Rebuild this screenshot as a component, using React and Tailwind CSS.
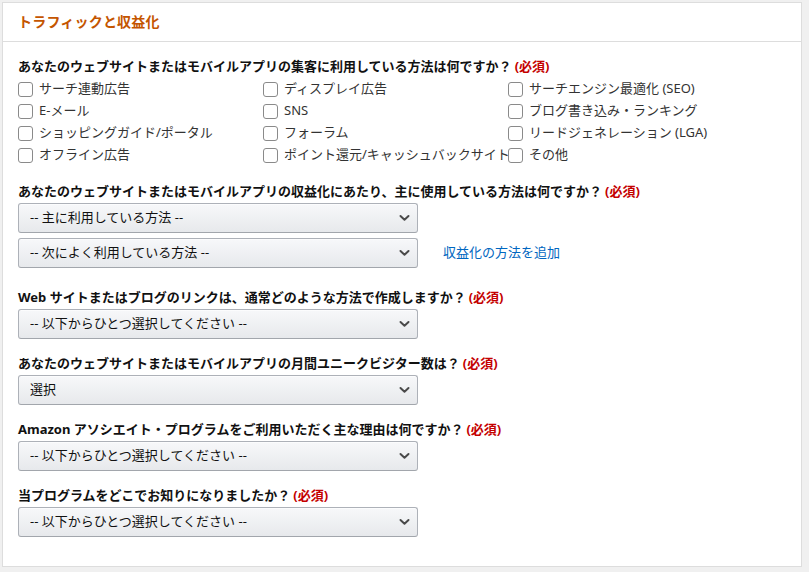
import React from "react";

const channels = [
  "サーチ連動広告",
  "ディスプレイ広告",
  "サーチエンジン最適化 (SEO)",
  "E-メール",
  "SNS",
  "ブログ書き込み・ランキング",
  "ショッピングガイド/ポータル",
  "フォーラム",
  "リードジェネレーション (LGA)",
  "オフライン広告",
  "ポイント還元/キャッシュバックサイト",
  "その他",
];

const Required = () => (
  <span className="ml-[3px] font-bold text-[#c40000]">(必須)</span>
);

const Label = ({ children, className = "" }) => (
  <div
    className={`text-[13px] leading-[20px] font-bold text-[#111111] whitespace-nowrap ${className}`}
  >
    {children}
    <Required />
  </div>
);

const Chevron = () => (
  <svg width="11" height="7" viewBox="0 0 11 7" fill="none">
    <path
      d="M1.5 1.5 L5.5 5.2 L9.5 1.5"
      stroke="#4a4a4a"
      strokeWidth="2"
      strokeLinecap="round"
      strokeLinejoin="round"
    />
  </svg>
);

const Dropdown = ({ value }) => (
  <div className="relative w-[400px] h-[30px]">
    <select
      defaultValue={value}
      className="appearance-none w-full h-full pl-[11px] pr-8 text-[13px] text-[#111111] rounded-[3px] border border-[#adb1b8] border-b-[#a2a6ac] bg-gradient-to-b from-[#f7f8fa] to-[#e7e9ec] shadow-[inset_0_1px_0_rgba(255,255,255,0.6)] outline-none"
    >
      <option>{value}</option>
    </select>
    <span className="pointer-events-none absolute right-[8px] top-1/2 -translate-y-1/2 flex items-center">
      <Chevron />
    </span>
  </div>
);

const Field = ({ label, value, className = "" }) => (
  <div className={className}>
    <Label className="mb-[2px]">{label}</Label>
    <Dropdown value={value} />
  </div>
);

export default function App() {
  return (
    <div
      className="min-h-screen bg-[#f0f0f0] pt-[2px] pl-[2px]"
      style={{ fontFamily: '"Noto Sans", "Noto Sans CJK JP", sans-serif' }}
    >
      <div className="w-[800px] h-[565px] bg-white border border-[#dddddd] flex flex-col">
        {/* section header */}
        <div className="h-[39px] shrink-0 border-b border-[#dddddd] flex items-center px-[15px]">
          <h2 className="text-[14px] leading-none font-bold text-[#c45500] tracking-[0.2px]">
            トラフィックと収益化
          </h2>
        </div>

        <div className="px-[15px] pt-[14px]">
          {/* traffic sources */}
          <Label>
            あなたのウェブサイトまたはモバイルアプリの集客に利用している方法は何ですか？
          </Label>
          <div className="mt-[2px] grid grid-cols-[245px_245px_245px]">
            {channels.map((c) => (
              <label
                key={c}
                className="h-[22px] flex items-center whitespace-nowrap text-[13px] text-[#333333]"
              >
                <input
                  type="checkbox"
                  className="appearance-none w-[15px] h-[15px] shrink-0 rounded-[3px] border border-[#8a8a8a] bg-white"
                />
                <span className="ml-[6px]">{c}</span>
              </label>
            ))}
          </div>

          {/* monetization */}
          <div className="mt-[15px]">
            <Label className="mb-[2px]">
              あなたのウェブサイトまたはモバイルアプリの収益化にあたり、主に使用している方法は何ですか？
            </Label>
            <Dropdown value="-- 主に利用している方法 --" />
            <div className="mt-[5px] flex items-center">
              <Dropdown value="-- 次によく利用している方法 --" />
              <a
                href="#"
                className="ml-[25px] text-[13px] text-[#0066c0] whitespace-nowrap"
              >
                収益化の方法を追加
              </a>
            </div>
          </div>

          <Field
            className="mt-[19px]"
            label="Web サイトまたはブログのリンクは、通常どのような方法で作成しますか？"
            value="-- 以下からひとつ選択してください --"
          />
          <Field
            className="mt-[14px]"
            label="あなたのウェブサイトまたはモバイルアプリの月間ユニークビジター数は？"
            value="選択"
          />
          <Field
            className="mt-[14px]"
            label="Amazon アソシエイト・プログラムをご利用いただく主な理由は何ですか？"
            value="-- 以下からひとつ選択してください --"
          />
          <Field
            className="mt-[14px]"
            label="当プログラムをどこでお知りになりましたか？"
            value="-- 以下からひとつ選択してください --"
          />
        </div>
      </div>
    </div>
  );
}
